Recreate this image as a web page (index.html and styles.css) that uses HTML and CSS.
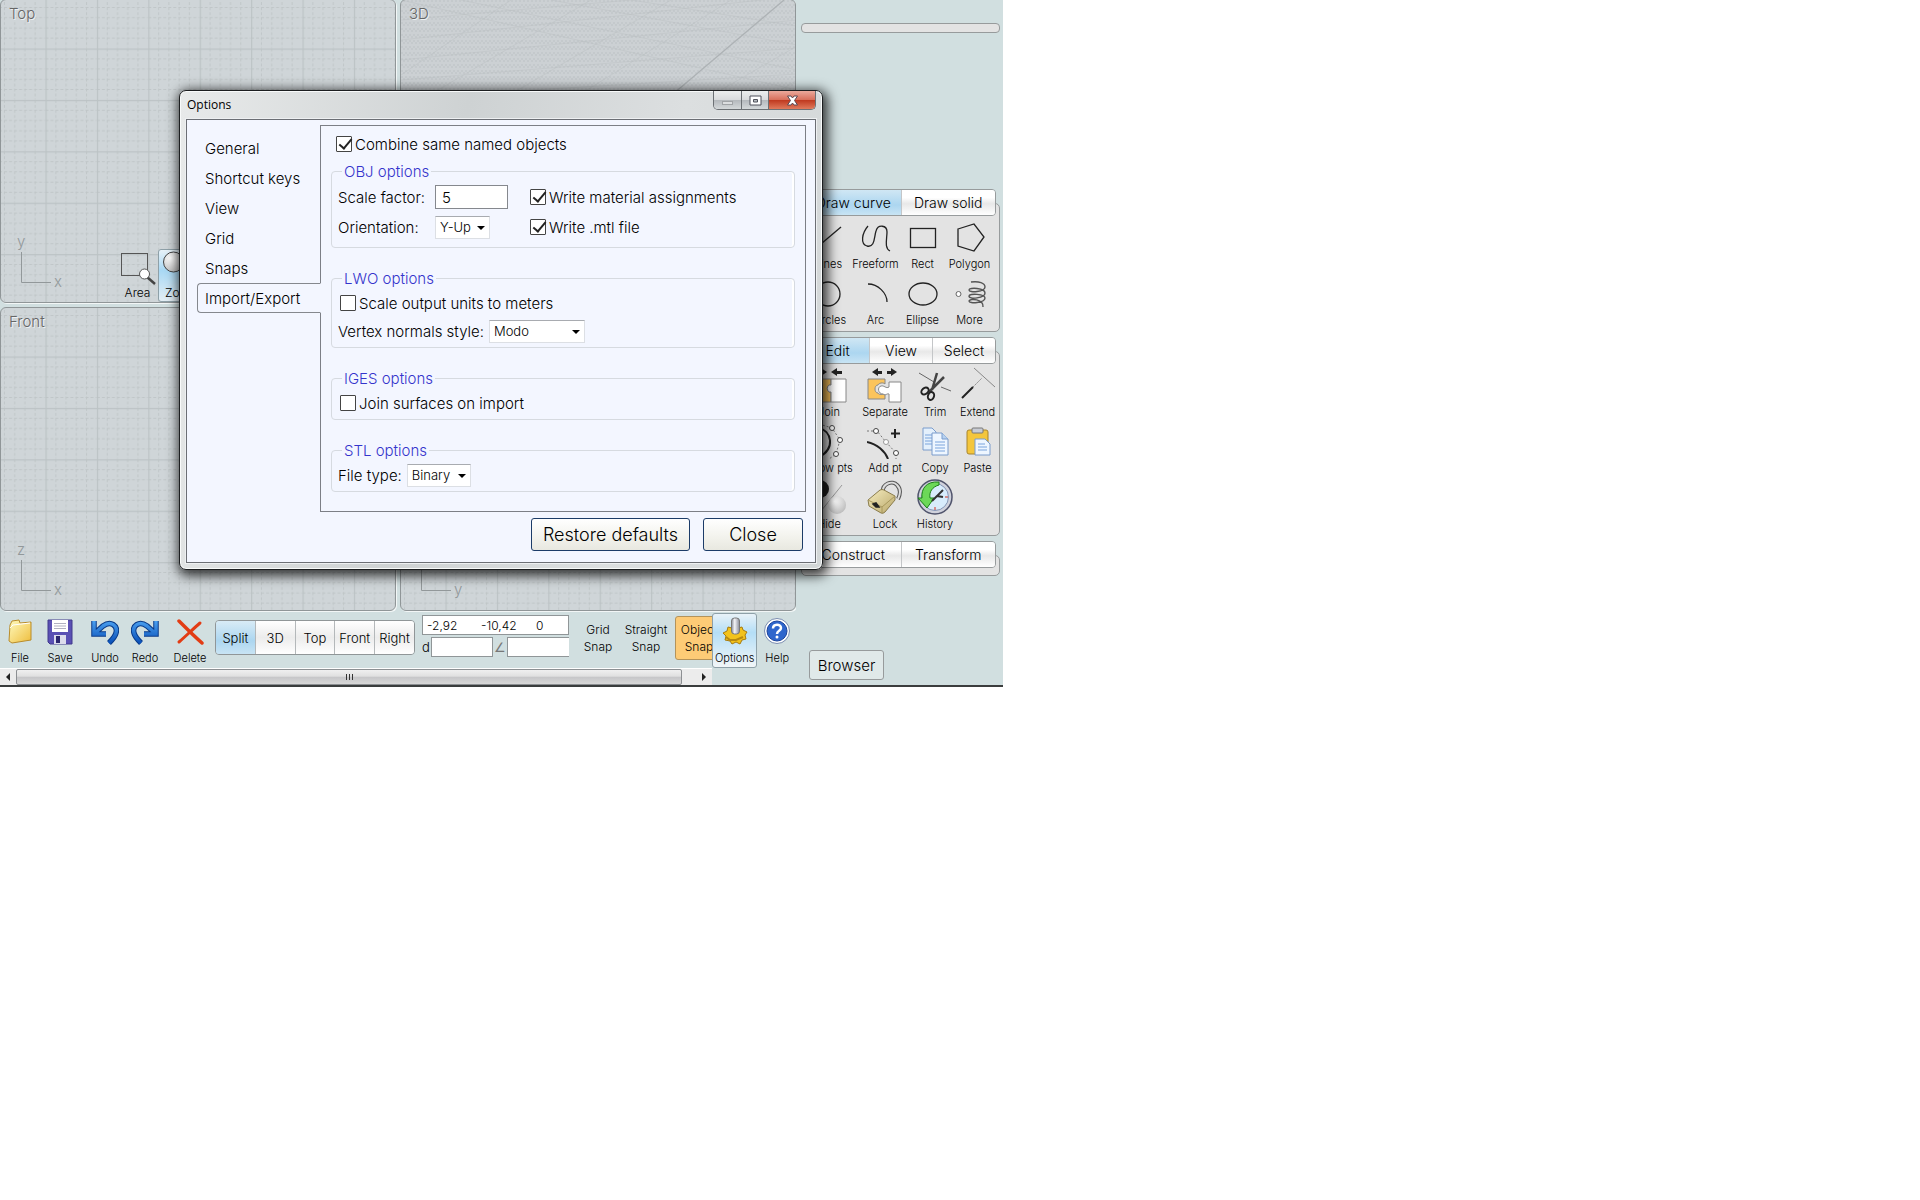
FILE: index.html
```html
<!DOCTYPE html>
<html lang="en">
<head>
  <meta charset="UTF-8" />
  <meta name="viewport" content="width=device-width, initial-scale=1.0" />
  <title>Options</title>
  <link rel="stylesheet" href="styles.css">
</head>
<body>
  <!-- shared shapes -->
  <svg class="defs" width="0" height="0" aria-hidden="true">
    <defs>
      <pattern id="grid" width="51.4" height="51.4" x="44.5" y="48.5" patternUnits="userSpaceOnUse">
        <path d="M10.3 0V51M20.6 0V51M30.8 0V51M41.1 0V51M0 10.3H51M0 20.6H51M0 30.8H51M0 41.1H51" stroke="#c0c6c8" stroke-width="1" stroke-dasharray="3 2" />
        <path d="M0.5 0V52M0 0.5H52" stroke="#bcc3c5" stroke-width="1.4" />
      </pattern>
      <pattern id="mesh" width="4" height="6" patternUnits="userSpaceOnUse">
        <path d="M1 0V4M3 2V6" stroke="#d4d8db" stroke-width="1" />
      </pattern>
      <linearGradient id="folder" x1="0" y1="0" x2="1" y2="1">
        <stop offset="0" stop-color="#fffbc0" /><stop offset="1" stop-color="#eebd3c" />
      </linearGradient>
      <linearGradient id="blue" x1="0" y1="0" x2="0" y2="1">
        <stop offset="0" stop-color="#4aa0f0" /><stop offset="1" stop-color="#0a50b8" />
      </linearGradient>
      <linearGradient id="brass" x1="0" y1="0" x2="1" y2="1">
        <stop offset="0" stop-color="#f6edc0" /><stop offset="1" stop-color="#b9a76a" />
      </linearGradient>
      <linearGradient id="steel" x1="0" y1="0" x2="1" y2="0">
        <stop offset="0" stop-color="#8a8d98" /><stop offset=".4" stop-color="#f4f4f8" /><stop offset="1" stop-color="#888b98" />
      </linearGradient>
      <radialGradient id="pearl" cx=".35" cy=".3" r=".8">
        <stop offset="0" stop-color="#fff" /><stop offset="1" stop-color="#b8b8b8" />
      </radialGradient>
    </defs>
  </svg>

  <div class="app">
    <main class="workspace">
      <div class="viewports">
        <section class="viewport">
          <svg class="grid"><rect width="100%" height="100%" fill="url(#grid)" /></svg>
          <h2>Top</h2>
          <div class="axes">
            <span class="axis-up">y</span>
            <svg width="31" height="32" fill="none" stroke="#92989a" stroke-width="1"><path d="M1.5 0V30.5H31" /></svg>
            <span class="axis-side">x</span>
          </div>
          <div class="view-tools">
            <button class="view-tool" type="button">
              <svg width="36" height="36" viewBox="0 0 36 36" fill="none">
                <rect x="1.5" y="3.5" width="26" height="22" stroke="#555" />
                <path d="M27 27L35 34" stroke="#444" stroke-width="2.5" />
                <circle cx="24.500" cy="24" r="5" fill="#fff" stroke="#555" />
              </svg>
              Area
            </button>
            <button class="view-tool active" type="button">
              <svg width="36" height="36" viewBox="0 0 36 36" fill="none">
                <path d="M18 21L31 33" stroke="#444" stroke-width="3" />
                <circle cx="10.500" cy="12" r="10" fill="url(#pearl)" stroke="#444" />
              </svg>
              Zoom
            </button>
          </div>
        </section>

        <section class="viewport perspective">
          <svg class="grid">
            <rect width="100%" height="100%" fill="url(#mesh)" />
            <path d="M0 60L396 20M0 80L396 48M0 40L396 -4M0 20L230 0M0 98L396 74M0 140L396 98M0 75L110 0M20 100L190 0M100 100L270 0M170 100L330 0M380 90L396 80M320 90L396 46M0 0L396 90M60 0L396 70M150 0L396 45M230 0L396 26" stroke="#b9bec1" stroke-width="1" fill="none" opacity=".4" />
            <path d="M272 94L383 0" stroke="#adb2b5" stroke-width="1.3" />
          </svg>
          <h2>3D</h2>
        </section>

        <section class="viewport">
          <svg class="grid"><rect width="100%" height="100%" fill="url(#grid)" /></svg>
          <h2>Front</h2>
          <div class="axes">
            <span class="axis-up">z</span>
            <svg width="31" height="32" fill="none" stroke="#92989a" stroke-width="1"><path d="M1.5 0V30.5H31" /></svg>
            <span class="axis-side">x</span>
          </div>
        </section>

        <section class="viewport">
          <svg class="grid"><rect width="100%" height="100%" fill="url(#grid)" /></svg>
          <div class="axes">
            <svg width="31" height="32" fill="none" stroke="#92989a" stroke-width="1"><path d="M1.5 0V30.5H31" /></svg>
            <span class="axis-side">y</span>
          </div>
        </section>
      </div>

      <div class="bottom">
        <div class="strip">
          <div class="strip-tools">
            <div class="group">
              <button class="tool" type="button">
                <svg width="28" height="28" viewBox="0 0 28 28">
                  <path d="M4 8L6 4L13 3L14 6L25 5V23L6 26L3 24Z" fill="url(#folder)" stroke="#b98c2a" />
                  <path d="M4 11L7 8L24 6" fill="none" stroke="#fff" />
                </svg>
                File
              </button>
              <button class="tool" type="button">
                <svg width="28" height="28" viewBox="0 0 28 28">
                  <path d="M2 3H26V27H4L2 25Z" fill="#5a50b4" stroke="#40388c" />
                  <rect x="6" y="3" width="16" height="12" fill="#fff" />
                  <path d="M8 6.500H20M8 9H20M8 11.500H20" stroke="#b0b0c0" />
                  <rect x="8" y="18" width="12" height="9" fill="#dcdcec" />
                  <rect x="10" y="19" width="4" height="7" fill="#2c2670" />
                </svg>
                Save
              </button>
            </div>
            <div class="group">
              <button class="tool" type="button">
                <svg width="28" height="28" viewBox="0 0 28 28" fill="none">
                  <path d="M3 4V17H15M3 17L12 9C20 3 27 9 25 16C24 20 21 23 18 26" stroke="#083a88" stroke-width="5.500" />
                  <path d="M3 4V17H15M3 17L12 9C20 3 27 9 25 16C24 20 21 23 18 26" stroke="url(#blue)" stroke-width="3.500" />
                </svg>
                Undo
              </button>
              <button class="tool" type="button">
                <svg width="28" height="28" viewBox="0 0 28 28" fill="none">
                  <path d="M25 4V17H13M25 17L16 9C8 3 1 9 3 16C4 20 7 23 10 26" stroke="#083a88" stroke-width="5.500" />
                  <path d="M25 4V17H13M25 17L16 9C8 3 1 9 3 16C4 20 7 23 10 26" stroke="url(#blue)" stroke-width="3.500" />
                </svg>
                Redo
              </button>
            </div>
            <div class="group">
              <button class="tool" type="button">
                <svg width="28" height="28" viewBox="0 0 28 28" fill="none" stroke="#e23c14" stroke-linecap="round">
                  <path d="M3 4C10 11 18 19 26 26" stroke-width="3.500" />
                  <path d="M24 6C17 12 10 19 3 25" stroke-width="3" />
                </svg>
                Delete
              </button>
            </div>

            <div class="segments">
              <button class="active" type="button">Split</button>
              <button type="button">3D</button>
              <button type="button">Top</button>
              <button type="button">Front</button>
              <button type="button">Right</button>
            </div>

            <div class="coords">
              <div class="readout"><span>-2,92</span><span>-10,42</span><span>0</span></div>
              <div class="entry">
                <label for="dist">d</label>
                <input id="dist" type="text">
                <label for="angle" class="angle">∠</label>
                <input id="angle" class="open" type="text">
              </div>
            </div>

            <div class="group">
              <button class="snap" type="button">Grid<br>Snap</button>
              <button class="snap" type="button">Straight<br>Snap</button>
            </div>
            <button class="snap active" type="button">Object<br>Snap</button>
          </div>
          <div class="scrollbar">
            <button class="arrow left" type="button" aria-label="Scroll left"></button>
            <div class="thumb"><i></i><i></i><i></i></div>
            <button class="arrow right" type="button" aria-label="Scroll right"></button>
          </div>
        </div>

        <div class="pinned">
          <button class="tool active" type="button">
            <svg width="28" height="28" viewBox="0 0 28 28">
              <path d="M14 9L17 11L21 10L22 13L26 15L24 18L25 22L21 23L19 27L15 25L11 27L9 24L4 23L5 19L2 16L6 14L7 10L11 11Z" fill="#f2c21c" stroke="#a87c10" />
              <path d="M5 20L9 23L15 23L22 20" fill="none" stroke="#b88a10" stroke-width="2" />
              <rect x="10.500" y="1" width="8" height="16" rx="3" fill="url(#steel)" stroke="#777" />
            </svg>
            Options
          </button>
          <button class="tool" type="button">
            <svg width="28" height="28" viewBox="0 0 28 28" fill="none">
              <circle cx="14" cy="14" r="12.500" fill="#fff" stroke="#7a8cb0" />
              <circle cx="14" cy="14" r="10" fill="#2f66cc" stroke="#1c449c" />
              <path d="M10 11.500C10 6.500 18 6.500 18 11C18 14 14 13.500 14 17" stroke="#fff" stroke-width="2.500" />
              <circle cx="14" cy="20" r="1.500" fill="#fff" />
            </svg>
            Help
          </button>
        </div>
      </div>
    </main>

    <aside class="sidebar">
      <div class="collapsed"></div>

      <section class="palette first">
        <div class="tabs two">
          <button class="active" type="button">Draw curve</button>
          <button type="button">Draw solid</button>
        </div>
        <div class="tools curve-tools">
          <button type="button">
            <svg width="36" height="36" viewBox="0 0 36 36"><path d="M4 30L30 8" /></svg>Lines
          </button>
          <button type="button">
            <svg width="36" height="36" viewBox="0 0 36 36"><path d="M10 7C4 14 2 25 9 27C17 29 16 18 18 12C20 5 29 6 29 13C29 20 26 29 32 32" /></svg>Freeform
          </button>
          <button type="button">
            <svg width="36" height="36" viewBox="0 0 36 36"><rect x="5.500" y="9.500" width="25" height="19" /></svg>Rect
          </button>
          <button type="button">
            <svg width="36" height="36" viewBox="0 0 36 36"><path d="M6 10L22 5L32 18L22 32L6 27Z" /></svg>Polygon
          </button>
          <button type="button">
            <svg width="36" height="36" viewBox="0 0 36 36"><circle cx="17" cy="19" r="12" /></svg>Circles
          </button>
          <button type="button">
            <svg width="36" height="36" viewBox="0 0 36 36"><path d="M10 9C20 9 29 18 29 27" /></svg>Arc
          </button>
          <button type="button">
            <svg width="36" height="36" viewBox="0 0 36 36"><ellipse cx="18" cy="19" rx="14" ry="11" /></svg>Ellipse
          </button>
          <button type="button">
            <svg width="36" height="36" viewBox="0 0 36 36">
              <circle cx="6.500" cy="19" r="2.500" fill="#fff" stroke="#666" stroke-width="1" />
              <path d="M19 7C27 6 33 8 33 12C33 17 17 18 17 15C17 12 33 13 33 18C33 23 17 25 17 21C17 18 33 19 33 23C33 28 17 29 17 26C18 23 32 24 31 32" stroke="#555" stroke-width="1.400" />
            </svg>More
          </button>
        </div>
      </section>

      <section class="palette">
        <div class="tabs three">
          <button class="active" type="button">Edit</button>
          <button type="button">View</button>
          <button type="button">Select</button>
        </div>
        <div class="tools edit-tools">
          <button type="button">
            <svg width="36" height="36" viewBox="0 0 36 36">
              <path d="M5 4H10V1L16 5L10 9V7H5ZM31 4H26V1L20 5L26 9V7H31Z" fill="#222" stroke="none" />
              <path d="M2 12H20V18C15 17 15 26 20 25V35H2Z" fill="#fbc45c" stroke="#888" stroke-width="1" />
              <path d="M20 12H35V35H20V25C15 26 15 17 20 18Z" fill="#fff" stroke="#888" stroke-width="1" />
            </svg>Join
          </button>
          <button type="button">
            <svg width="36" height="36" viewBox="0 0 36 36">
              <path d="M15 4H11V1L5 5L11 9V7H15ZM20 4H24V1L30 5L24 9V7H20Z" fill="#222" stroke="none" />
              <path d="M1 12H18V17C16 15 12 16 11 18C7 18 7 26 11 26C12 28 16 28 18 26V32H1Z" fill="#fbc45c" stroke="#888" stroke-width="1" />
              <path d="M22 15H34V35H22V27C20 26 19 29 16 27C11 27 10 20 14 19C17 18 19 22 22 20Z" fill="#fff" stroke="#888" stroke-width="1" />
            </svg>Separate
          </button>
          <button type="button">
            <svg width="36" height="36" viewBox="0 0 36 36">
              <path d="M2 6L17 15M24 20L34 24" stroke="#666" stroke-width="1" />
              <path d="M20 6L15 23M27 10L12 25" stroke="#444" stroke-width="2.500" />
              <ellipse cx="8" cy="24" rx="3" ry="4" stroke-width="2" transform="rotate(50 8 24)" />
              <ellipse cx="14" cy="29" rx="3" ry="4" stroke-width="2" transform="rotate(20 14 29)" />
            </svg>Trim
          </button>
          <button type="button">
            <svg width="36" height="36" viewBox="0 0 36 36">
              <path d="M14 1L35 20" stroke="#888" stroke-width="1" />
              <path d="M13 20L22 11" stroke="#888" stroke-width="1" stroke-dasharray="2 1" />
              <path d="M2 31L13 20" stroke-width="2" />
            </svg>Extend
          </button>
          <button type="button">
            <svg width="36" height="36" viewBox="0 0 36 36">
              <path d="M6 4C22 8 24 26 8 34" stroke-width="2" />
              <path d="M8 1L21 5L29 17L25 31L18 36" stroke="#777" stroke-width="1" stroke-dasharray="2 2" />
              <g fill="#fff" stroke="#444" stroke-width="1"><circle cx="21" cy="5" r="2.500" /><circle cx="29" cy="17" r="2.500" /><circle cx="25" cy="31" r="2.500" /></g>
            </svg>Show pts
          </button>
          <button type="button">
            <svg width="36" height="36" viewBox="0 0 36 36">
              <path d="M0 19C10 21 18 28 21 36" stroke-width="2" />
              <path d="M0 8H10L19 19L29 30V36" stroke="#777" stroke-width="1" stroke-dasharray="2 2" />
              <path d="M28 6V15M24 10.500H33" stroke-width="2" />
              <g fill="#fff" stroke="#444" stroke-width="1"><circle cx="9" cy="8" r="2.500" /><circle cx="19" cy="19" r="2.500" stroke="#999" /><circle cx="29" cy="30" r="2.500" /></g>
            </svg>Add pt
          </button>
          <button type="button">
            <svg width="36" height="36" viewBox="0 0 36 36">
              <path d="M6 5H15L19 9V27H6Z" fill="#e4f0fc" stroke="#7a9ccc" stroke-width="1" />
              <path d="M8 12H16M8 15H16M8 18H16M8 21H16" stroke="#7aa4dc" stroke-width="1" />
              <path d="M15 10H25L31 16V32H15Z" fill="#eef6ff" stroke="#7a9ccc" stroke-width="1" />
              <path d="M25 10V16H31" fill="#b8d2f0" stroke="#7a9ccc" stroke-width="1" />
              <path d="M18 19H28M18 22H28M18 25H28M18 28H28" stroke="#7aa4dc" stroke-width="1" />
            </svg>Copy
          </button>
          <button type="button">
            <svg width="36" height="36" viewBox="0 0 36 36">
              <rect x="7" y="7" width="21" height="24" rx="2" fill="#f4c63c" stroke="#a8842c" stroke-width="1" />
              <rect x="12" y="5" width="11" height="5" rx="1" fill="#c8ccd4" stroke="#777" stroke-width="1" />
              <path d="M15 16H25L30 21V32H15Z" fill="#eef6ff" stroke="#7a9ccc" stroke-width="1" />
              <path d="M18 21H25M18 24H27M18 27H27" stroke="#7aa4dc" stroke-width="1" />
            </svg>Paste
          </button>
          <button type="button">
            <svg width="36" height="36" viewBox="0 0 36 36">
              <circle cx="9" cy="10" r="9" fill="#222" stroke="none" />
              <path d="M10 32L31 6" stroke="#999" stroke-width="1" />
              <circle cx="26" cy="26" r="9" fill="url(#pearl)" stroke="none" />
            </svg>Hide
          </button>
          <button type="button">
            <svg width="36" height="36" viewBox="0 0 36 36">
              <path d="M16 15C14 4 26 1 30 6C34 10 34 14 31 20" stroke="#555" stroke-width="4" />
              <path d="M16 15C14 4 26 1 30 6C34 10 34 14 31 20" stroke="#ddd" stroke-width="2" />
              <path d="M1 21L13 11Q15 10 17 11L28 17V21L18 33Q16 35 14 34L2 27Z" fill="url(#brass)" stroke="#8a7c4c" stroke-width="1" />
              <path d="M1 21L15 28L28 17M15 28V34" stroke="#a8985c" stroke-width="1" />
              <path d="M6 25L9 24L12 28L9 28Z" fill="#222" stroke-width="1.500" />
            </svg>Lock
          </button>
          <button type="button">
            <svg width="36" height="36" viewBox="0 0 36 36">
              <circle cx="18" cy="18" r="17" fill="#d0d2dc" stroke="#50546c" stroke-width="1.500" />
              <circle cx="18" cy="18" r="13.500" fill="#d8ecfc" stroke="#8494b4" stroke-width="1" />
              <path d="M22 3C9 2 4 10 5 19H1L10 29L17 19H13C12 13 15 8 22 6Z" fill="#6cd858" stroke="#1c8018" stroke-width="1" />
              <path d="M26 11L20 17L26 18M20 17L15 22" stroke="#333" stroke-width="2" />
              <path d="M18 28V31M28 18H31" stroke="#d03020" stroke-width="1" />
            </svg>History
          </button>
        </div>
      </section>

      <section class="palette">
        <div class="tabs two">
          <button type="button">Construct</button>
          <button type="button">Transform</button>
        </div>
        <div class="tools"></div>
      </section>

      <button class="browser" type="button">Browser</button>
    </aside>

    <div class="dialog" role="dialog" aria-labelledby="dialog-title">
      <header class="titlebar">
        <h1 id="dialog-title">Options</h1>
        <div class="window-buttons">
          <button type="button" aria-label="Minimize">
            <svg width="13" height="13" viewBox="0 0 13 13"><rect x="1.500" y="7.500" width="10" height="3" fill="#dcdee0" stroke="#a0a3a6" /></svg>
          </button>
          <button type="button" aria-label="Maximize">
            <svg width="13" height="13" viewBox="0 0 13 13"><path d="M1 2H12V11H1ZM4.500 5.500V8H8.500V5.500Z" fill="#fff" fill-rule="evenodd" stroke="#50535c" /></svg>
          </button>
          <button class="close" type="button" aria-label="Close window">
            <svg width="13" height="13" viewBox="0 0 13 13"><path d="M1.500 2H5L6.500 4L8 2H11.500L8.500 6.500L11.500 11H8L6.500 9L5 11H1.500L4.500 6.500Z" fill="#fff" stroke="#5c4850" /></svg>
          </button>
        </div>
      </header>

      <div class="dialog-body">
        <div class="dialog-main">
          <nav class="pages">
            <button type="button">General</button>
            <button type="button">Shortcut keys</button>
            <button type="button">View</button>
            <button type="button">Grid</button>
            <button type="button">Snaps</button>
            <button class="active" type="button">Import/Export</button>
          </nav>

          <form class="page">
            <div class="row">
              <label class="check"><input type="checkbox" checked>Combine same named objects</label>
            </div>

            <fieldset>
              <legend>OBJ options</legend>
              <div class="obj-grid">
                <label for="scale">Scale factor:</label>
                <input id="scale" class="number" type="text" value="5">
                <label class="check"><input type="checkbox" checked>Write material assignments</label>
                <label for="orientation">Orientation:</label>
                <span class="select short"><select id="orientation"><option>Y-Up</option><option>Z-Up</option></select></span>
                <label class="check"><input type="checkbox" checked>Write .mtl file</label>
              </div>
            </fieldset>

            <fieldset>
              <legend>LWO options</legend>
              <div class="line inset"><label class="check"><input type="checkbox">Scale output units to meters</label></div>
              <div class="line">
                <label for="normals">Vertex normals style:</label>
                <span class="select long"><select id="normals"><option>Modo</option><option>Lightwave</option></select></span>
              </div>
            </fieldset>

            <fieldset>
              <legend>IGES options</legend>
              <div class="line inset"><label class="check"><input type="checkbox">Join surfaces on import</label></div>
            </fieldset>

            <fieldset>
              <legend>STL options</legend>
              <div class="line">
                <label for="filetype">File type:</label>
                <span class="select medium"><select id="filetype"><option>Binary</option><option>ASCII</option></select></span>
              </div>
            </fieldset>
          </form>
        </div>

        <footer class="actions">
          <button class="wide" type="button">Restore defaults</button>
          <button type="button">Close</button>
        </footer>
      </div>
    </div>
  </div>
</body>
</html>
```

FILE: styles.css
```css
* {
  margin: 0;
  padding: 0;
  box-sizing: border-box;
}

body {
  font-family: "Century Gothic", Inter, sans-serif;
  font-weight: 300;
  font-size: 15px;
  color: #000;
  background: #fff;
}

button,
input,
select {
  font: inherit;
  color: inherit;
}

button {
  border: none;
  background: none;
  cursor: pointer;
}

svg {
  display: block;
}

.defs {
  position: absolute;
}

.app {
  position: relative;
  display: flex;
  width: 52.24%;
  min-width: 1000px;
  background: #d1dfe0;
  border-bottom: 2px solid #3a3d3d;
}

.workspace {
  flex: 1;
  min-width: 0;
  overflow: hidden;
}

/* viewports */

.viewports {
  display: grid;
  grid-template-columns: 1fr 1fr;
  gap: 4px;
  margin-top: -1px;
}

.viewport {
  position: relative;
  min-height: 304px;
  border: 1px solid #909698;
  border-radius: 6px;
  background: #cfd5d8;
  overflow: hidden;
  box-shadow: 1px 1px 0 #f2f6f6;
}

.viewport.perspective {
  background: #c4c9cc;
}

.grid {
  position: absolute;
  top: 0;
  left: 0;
  width: 100%;
  height: 100%;
}

.viewport h2 {
  position: relative;
  padding: 5px 8px;
  font-size: 15px;
  line-height: 18px;
  font-weight: 300;
  color: #666;
  text-shadow: 1px 1px 0 #eef1f2;
}

.axes {
  position: absolute;
  left: 19px;
  bottom: 18px;
  color: #92989a;
  font-size: 15px;
  line-height: 16px;
}

.axis-up {
  position: absolute;
  left: -3px;
  bottom: 34px;
}

.axis-side {
  position: absolute;
  left: 34px;
  bottom: -6px;
}

.view-tools {
  position: absolute;
  left: 116px;
  bottom: 0;
  display: flex;
}

.view-tool {
  display: flex;
  flex-direction: column;
  align-items: center;
  width: 41px;
  height: 53px;
  font-size: 12px;
  line-height: 14px;
  border: 1px solid transparent;
  border-radius: 3px;
}

.view-tool.active {
  width: 46px;
  border-color: #8ea0a8;
  background: linear-gradient(#e8f2f8, #a8d8f4 40%, #e4eef4);
}

/* bottom toolbar */

.bottom {
  display: flex;
}

.strip {
  flex: 1;
  min-width: 0;
  overflow: hidden;
}

.strip-tools {
  display: flex;
  gap: 5px;
  height: 57px;
}

.group {
  display: flex;
  flex: none;
}

.tool {
  display: flex;
  flex-direction: column;
  align-items: center;
  width: 40px;
  height: 55px;
  padding-top: 5px;
  font-size: 11px;
  line-height: 14px;
  border: 1px solid transparent;
}

.tool svg {
  margin-bottom: 6px;
}

.segments {
  display: flex;
  flex: none;
  width: 200px;
  height: 35px;
  margin-top: 9px;
  border: 1px solid #909698;
  border-radius: 4px;
  overflow: hidden;
}

.segments button {
  flex: 1;
  font-size: 13px;
  background: linear-gradient(#fff, #ececec 50%, #fff);
}

.segments button + button {
  border-left: 1px solid #b4b8ba;
}

.segments .active,
.tabs .active {
  background: linear-gradient(#d8ebf6, #acd6f0 60%, #c8e4f4);
}

.coords {
  flex: none;
  width: 147px;
  margin: 4px 0 0 2px;
  font-size: 13px;
}

.readout {
  display: grid;
  grid-template-columns: 54px 55px 1fr;
  height: 20px;
  padding-left: 4px;
  line-height: 19px;
  font-size: 12px;
  background: #fff;
  border: 1px solid #909698;
}

.entry {
  display: flex;
  margin-top: 2px;
  line-height: 20px;
}

.entry label {
  width: 9px;
}

.entry .angle {
  width: 14px;
  text-align: center;
  color: #777;
}

.entry input {
  width: 62px;
  height: 20px;
  border: 1px solid #909698;
  background: #fff;
}

.entry .open {
  border-right: none;
}

.snap {
  flex: none;
  width: 48px;
  height: 44px;
  margin-top: 5px;
  font-size: 12px;
  line-height: 17px;
  white-space: nowrap;
}

.snap.active {
  background: #fdcb76;
  border: 1px solid #b4935a;
  border-radius: 3px;
}

.scrollbar {
  display: flex;
  height: 17px;
  background: #ececec;
  border-top: 1px solid #fff;
}

.arrow {
  display: flex;
  align-items: center;
  justify-content: center;
  width: 16px;
}

.arrow::before {
  content: "";
  border: 4px solid transparent;
}

.arrow.left::before {
  border-right-color: #222;
  border-left: none;
}

.arrow.right {
  margin-left: 14px;
}

.arrow.right::before {
  border-left-color: #222;
  border-right: none;
}

.thumb {
  flex: 1;
  display: flex;
  justify-content: center;
  align-items: center;
  gap: 2px;
  border: 1px solid #8c8f92;
  border-radius: 2px;
  background: linear-gradient(#f0f0f0, #e0e0e0 45%, #c6c6c8 50%, #d8d8d8);
}

.thumb i {
  width: 1px;
  height: 6px;
  background: #333;
}

.pinned {
  display: flex;
  gap: 1px;
  width: 84px;
  padding-top: 2px;
}

.pinned .tool {
  width: 38px;
  padding-top: 3px;
}

.pinned .tool.active {
  width: 46px;
  border: 1px solid #8ea0a8;
  border-radius: 3px;
  background: linear-gradient(#e8f2f8, #b4def6 35%, #f2f6f8);
}

/* sidebar */

.sidebar {
  width: 207px;
  padding: 23px 3px 0 5px;
}

.collapsed {
  height: 10px;
  border: 1px solid #979b9c;
  border-radius: 4px;
  background: #e3e3e3;
}

.palette {
  margin-top: 5px;
}

.palette.first {
  margin-top: 156px;
}

.tabs {
  position: relative;
  display: grid;
  height: 27px;
  margin: 0 4px -13px;
  border: 1px solid #979b9c;
  border-radius: 4px;
  overflow: hidden;
}

.tabs.two {
  grid-template-columns: 1fr 1fr;
}

.tabs.three {
  grid-template-columns: 1fr 1fr 1fr;
}

.tabs button {
  font-size: 14px;
  line-height: 20px;
  background: linear-gradient(#fff, #fff 30%, #e8e8e8 55%, #fff);
}

.tabs button + button {
  border-left: 1px solid #c4c6c8;
}

.tabs .active {
  background: linear-gradient(#d0e7f4, #acd6f0 60%, #c8e4f4);
}

.tools {
  display: grid;
  row-gap: 2px;
  min-height: 21px;
  padding: 15px 0 2px;
  border: 1px solid #979b9c;
  border-radius: 5px;
  background: #e3e3e3;
}

.curve-tools {
  grid-template-columns: repeat(4, 47px);
  padding-left: 3px;
}

.edit-tools {
  grid-template-columns: 54px 58px 42px 1fr;
}

.tools button {
  display: flex;
  flex-direction: column;
  align-items: center;
  height: 54px;
  font-size: 11px;
  line-height: 18px;
  white-space: nowrap;
}

.tools svg {
  flex: none;
  fill: none;
  stroke: #222;
  stroke-width: 1.3;
}

.browser {
  width: 75px;
  height: 30px;
  margin: 74px 0 0 8px;
  font-size: 15px;
  border: 1px solid #979b9c;
  border-radius: 3px;
  background: #e0e9e9;
}

/* options dialog */

.dialog {
  position: absolute;
  top: 90px;
  left: 179px;
  width: 644px;
  padding: 0 6px 6px;
  border: 1px solid #1c1e20;
  border-radius: 7px;
  background: linear-gradient(100deg, #e8eaea, #ced2d3 40%, #dcdfe0 70%, #d2d6d7);
  box-shadow: inset 0 0 0 1px #f8fafa, 2px 3px 12px 3px rgba(0, 0, 0, 0.75);
}

.titlebar {
  display: flex;
  justify-content: space-between;
  height: 28px;
}

.titlebar h1 {
  padding: 4px 0 0 1px;
  font-family: "Segoe UI", "Open Sans", sans-serif;
  font-size: 12px;
  line-height: 20px;
  font-weight: 400;
}

.window-buttons {
  display: flex;
  height: 19px;
  border: 1px solid #6c7074;
  border-top: none;
  border-radius: 0 0 5px 5px;
  overflow: hidden;
}

.window-buttons button {
  display: flex;
  align-items: center;
  justify-content: center;
  width: 27px;
  background: linear-gradient(#eceeee, #d8dadc 50%, #b4b8bc 50%, #d4d8da);
}

.window-buttons button + button {
  border-left: 1px solid #6c7074;
}

.window-buttons .close {
  width: 47px;
  background: linear-gradient(#eba99c, #d8705c 48%, #c03a20 52%, #e07a5c);
}

.dialog-body {
  padding: 5px 9px 11px 10px;
  border: 1px solid #6b6e74;
  background: #f3f6ff;
  box-shadow: 0 0 0 1px #eef0f2;
}

.dialog-main {
  display: flex;
}

.pages {
  position: relative;
  display: flex;
  flex-direction: column;
  width: 124px;
  margin-right: -1px;
  padding-top: 8px;
}

.pages button {
  height: 30px;
  padding-left: 7px;
  text-align: left;
  border: 1px solid transparent;
}

.pages .active {
  border-color: #85888e;
  border-right-color: #f3f6ff;
  border-radius: 4px 0 0 4px;
  background: #f3f6ff;
}

.page {
  flex: 1;
  padding: 6px 10px 19px;
  border: 1px solid #7c7f86;
}

.row {
  display: flex;
  align-items: center;
  height: 24px;
  padding-left: 5px;
}

fieldset {
  margin-top: 19px;
  padding: 0 6px 2px;
  border: 1px solid #d6dae0;
  border-radius: 4px;
  box-shadow: inset -2px 0 0 #fff;
}

.row + fieldset {
  margin-top: 4px;
}

legend {
  margin-left: 4px;
  padding: 2px 2px 0;
  line-height: 20px;
  color: #3434cc;
}

.obj-grid {
  display: grid;
  grid-template-columns: 97px 95px 1fr;
  grid-auto-rows: 30px;
  align-items: center;
  padding-bottom: 3px;
}

.line {
  display: flex;
  align-items: center;
  gap: 5px;
  height: 28px;
}

.inset {
  padding-left: 2px;
}

.check {
  display: flex;
  align-items: center;
  gap: 3px;
}

.check input {
  appearance: none;
  position: relative;
  width: 16px;
  height: 16px;
  border: 1px solid #444;
  border-radius: 1px;
  background: #fff;
}

.check input:checked::after {
  content: "";
  position: absolute;
  top: -1px;
  left: 5px;
  width: 5px;
  height: 11px;
  border: solid #222;
  border-width: 0 2px 2px 0;
  transform: rotate(40deg);
}

.number {
  width: 73px;
  height: 24px;
  padding-left: 6px;
  border: 1px solid #85888e;
  background: #fff;
}

.select {
  position: relative;
  height: 23px;
}

.select::after {
  content: "";
  position: absolute;
  top: 10px;
  right: 5px;
  border: 4px solid transparent;
  border-top-color: #000;
  border-bottom: none;
}

.select select {
  appearance: none;
  width: 100%;
  height: 100%;
  padding-left: 4px;
  font-size: 13px;
  border: 1px solid #dcdfe4;
  border-top-color: #a8abb0;
  background: #fff;
}

.short {
  width: 55px;
}

.medium {
  width: 64px;
}

.long {
  width: 96px;
}

.actions {
  display: flex;
  justify-content: flex-end;
  gap: 13px;
  padding: 6px 3px 0 0;
}

.actions button {
  width: 100px;
  height: 33px;
  font-size: 18px;
  border: 1px solid #1c3c68;
  border-radius: 3px;
  background: linear-gradient(#fff, #f2f2ec 60%, #e8e8e0);
}

.actions .wide {
  width: 159px;
}
```
